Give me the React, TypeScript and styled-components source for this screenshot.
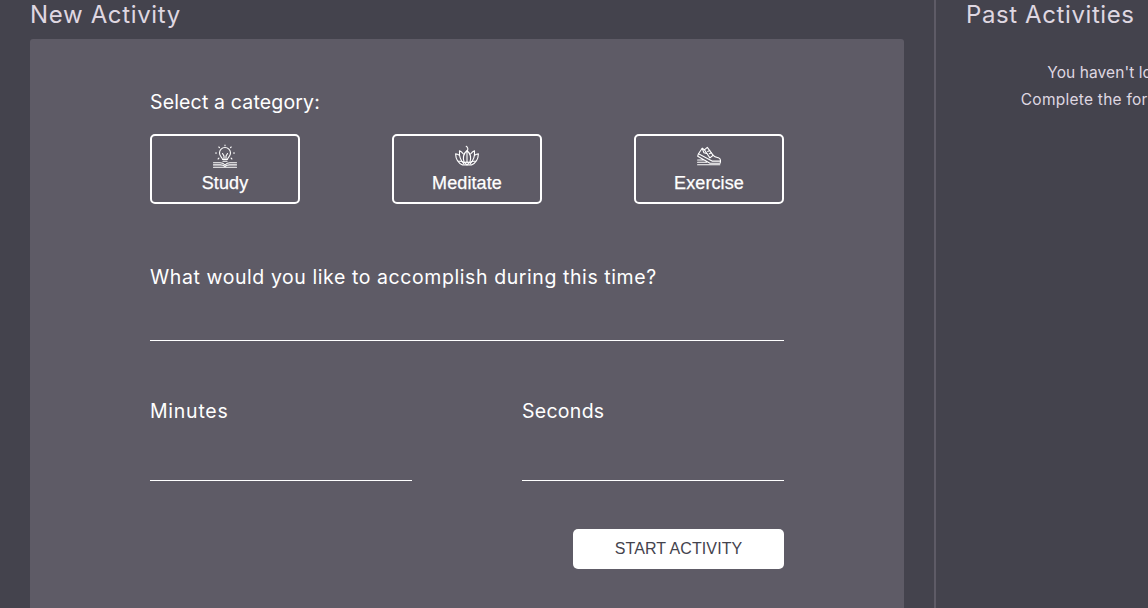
import React from 'react';
import styled, { createGlobalStyle } from 'styled-components';

const Global = createGlobalStyle`
  * { box-sizing: border-box; }
  html, body { margin: 0; height: 100%; overflow: hidden; background: #44434d; }
`;

const Page = styled.div`
  display: flex;
  width: 100vw;
  height: 100vh;
  overflow: hidden;
  background: #44434d;
  color: #dfd7e1;
  font-family: Inter, sans-serif;
`;

const Main = styled.main`
  display: flex;
  flex-direction: column;
  flex: 0 0 934px;
  padding: 0 30px;
`;

const Aside = styled.aside`
  flex: 0 0 500px;
  border-left: 2px solid #5e5b66;
  padding: 0 30px;
`;

const Title = styled.h2<{ $spacing: number }>`
  margin: 0;
  height: 39px;
  line-height: 30px;
  font-size: 24px;
  font-weight: 400;
  letter-spacing: ${(p) => p.$spacing}px;
  white-space: nowrap;
`;

const Card = styled.form`
  flex: 1;
  padding: 50px 120px 0;
  border-radius: 3px 3px 0 0;
  background: #5e5b66;
  color: #fff;
`;

const Label = styled.label<{ $spacing: number }>`
  display: block;
  height: 26px;
  line-height: 26px;
  font-size: 19.5px;
  letter-spacing: ${(p) => p.$spacing}px;
  white-space: nowrap;
`;

const Categories = styled.div`
  display: flex;
  justify-content: space-between;
  margin: 19px 0 60px;
`;

const Category = styled.button`
  display: flex;
  flex-direction: column;
  align-items: center;
  width: 150px;
  height: 70px;
  padding: 8px 0 0;
  border: 2px solid #fff;
  border-radius: 5px;
  background: transparent;
  color: #fff;
  font: 18px/21px 'Liberation Sans', sans-serif;
  letter-spacing: 0.1px;
  -webkit-text-stroke: 0.25px #fff;

  svg { display: block; margin-bottom: 5px; }
`;

const Input = styled.input<{ $height: number }>`
  display: block;
  width: 100%;
  height: ${(p) => p.$height}px;
  padding: 0;
  border: 0;
  border-bottom: 1px solid #fff;
  border-radius: 0;
  background: transparent;
  color: #fff;
  outline: none;
`;

const Times = styled.div`
  display: flex;
  justify-content: space-between;
  margin-top: 57px;
`;

const TimeField = styled.div`
  width: 262px;
`;

const Actions = styled.div`
  display: flex;
  justify-content: flex-end;
  margin-top: 48px;
`;

const Start = styled.button`
  width: 211px;
  height: 40px;
  padding: 0;
  border: 0;
  border-radius: 5px;
  background: #fff;
  color: #44434d;
  font: 16px/40px 'Liberation Sans', sans-serif;
  letter-spacing: 0.1px;
`;

const Empty = styled.div`
  margin-top: 20px;
  text-align: center;
  font-size: 15.5px;
  line-height: 27px;
  white-space: nowrap;
`;

const Line = styled.p<{ $spacing: number }>`
  margin: 0;
  letter-spacing: ${(p) => p.$spacing}px;
`;

const Icon = ({ children }: { children: React.ReactNode }) => (
  <svg width="24" height="24" viewBox="0 0 24 24" fill="none" stroke="#fff" strokeWidth="1.1" strokeLinecap="round" strokeLinejoin="round">
    {children}
  </svg>
);

const StudyIcon = () => (
  <Icon>
    <path d="M9.600 15.500c0-1.800-3.100-3-3.100-6.500a5.500 5.500 0 0 1 11 0c0 3.500-3.100 4.700-3.100 6.500zM10 17.300h4M11 15V12L9.500 9.500M13 15V12l1.500-2.500" />
    <path d="M12 1.700V1M6.500 3.700l-.7-.7M17.500 3.700l.7-.7M3.500 9H2.500M20.500 9h1M5.900 14.200l-.8.8M18.100 14.200l.8.8" />
    <path d="M.5 18.700h6.500c2 0 3.500.6 5 2.300 1.500-1.700 3-2.300 5-2.300h6.500M.5 20.900h7c2 0 3 .4 4.500 1.500 1.500-1.100 2.500-1.500 4.500-1.500h7M.5 23.200h23" />
  </Icon>
);

const MeditateIcon = () => (
  <Icon>
    <path d="M9.200 18.500C7.500 13.500 8.500 9.500 12 6.500c3.500 3 4.500 7 2.800 12M12 8v10.500M12 6.500c1.600-1 .8-3.500-.8-4.300" />
    <path d="M8.400 10C7.200 8.500 6 7.500 4.500 6.800c-.4 5 .7 9.500 4.200 12.700M15.600 10c1.200-1.500 2.400-2.500 3.900-3.200.4 5-.7 9.500-4.200 12.700" />
    <path d="M4.400 11.200C3.200 10.500 2 10 .6 9.900c.2 5.100 2.600 9 6.900 11h9c4.300-2 6.700-5.900 6.900-11-1.400.1-2.600.6-3.800 1.300" />
    <path d="M3.500 17.300c3.500-.5 6.500.8 8.500 3.700 2-2.900 5-4.200 8.500-3.700M8.700 18.700c1.200-.8 5.400-.8 6.600 0" />
  </Icon>
);

const ExerciseIcon = () => (
  <Icon>
    <path d="M1.500 9.700 5.200 4.300l2.200 1.500 2.900-2.500 5.900 8c1.300 1.600 3.200 2 5.200 2.500 1.800.5 2.200 1.700 2.100 3.300H15L1.500 9.700z" />
    <path d="M1.500 9.700.7 12.200l12.300 7.100h10.200l.3-2.200M.6 16h5.500M.6 18.200h9M.6 20.700h22.200M5.200 4.300l1.700 4.500 3.500 1M7.400 5.800l5.500 8.100 3.300-2.600M10.700 7.500l2-1M12.300 9.700l2-1" />
  </Icon>
);

export default function App() {
  return (
    <>
      <Global />
      <Page>
        <Main>
          <Title $spacing={0.65}>New Activity</Title>
          <Card>
            <Label as="div" $spacing={0.16}>Select a category:</Label>
            <Categories>
              <Category type="button"><StudyIcon />Study</Category>
              <Category type="button"><MeditateIcon />Meditate</Category>
              <Category type="button"><ExerciseIcon />Exercise</Category>
            </Categories>
            <Label htmlFor="goal" $spacing={0.58}>What would you like to accomplish during this time?</Label>
            <Input id="goal" $height={51} />
            <Times>
              <TimeField>
                <Label htmlFor="minutes" $spacing={0.75}>Minutes</Label>
                <Input id="minutes" $height={57} />
              </TimeField>
              <TimeField>
                <Label htmlFor="seconds" $spacing={0.28}>Seconds</Label>
                <Input id="seconds" $height={57} />
              </TimeField>
            </Times>
            <Actions><Start type="button">START ACTIVITY</Start></Actions>
          </Card>
        </Main>
        <Aside>
          <Title $spacing={0.6}>Past Activities</Title>
          <Empty>
            <Line $spacing={0.08}>You haven't logged any activities yet.</Line>
            <Line $spacing={0.25}>Complete the form to the left to get started!</Line>
          </Empty>
        </Aside>
      </Page>
    </>
  );
}
